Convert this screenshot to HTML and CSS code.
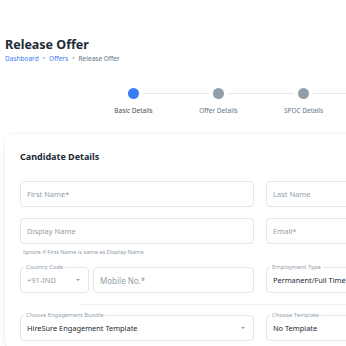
FILE: index.html
```html
<!DOCTYPE html>
<html lang="en">
<head>
  <meta charset="UTF-8">
  <title>Release Offer</title>
  <link rel="stylesheet" href="styles.css">
</head>
<body>
  <div class="page">
    <h1 class="title">Release Offer</h1>
    <div class="crumbs">
      <span class="crumb-link">Dashboard</span>
      <span class="dot">•</span>
      <span class="crumb-link">Offers</span>
      <span class="dot">•</span>
      <span class="crumb-current">Release Offer</span>
    </div>

    <div class="stepper">
      <div class="step first">
        <div class="step-top"><span class="bar"></span><span class="circle active"></span><span class="bar"></span></div>
        <div class="step-label active">Basic Details</div>
      </div>
      <div class="step">
        <div class="step-top"><span class="bar"></span><span class="circle"></span><span class="bar"></span></div>
        <div class="step-label">Offer Details</div>
      </div>
      <div class="step">
        <div class="step-top"><span class="bar"></span><span class="circle"></span><span class="bar"></span></div>
        <div class="step-label">SPOC Details</div>
      </div>
    </div>

    <div class="card">
      <h3 class="card-title">Candidate Details</h3>

      <div class="grid">
        <div class="input"><span class="ph">First Name*</span></div>
        <div class="input"><span class="ph">Last Name</span></div>

        <div class="cell">
          <div class="input"><span class="ph">Display Name</span></div>
          <div class="helper">Ignore if First Name is same as Display Name</div>
        </div>
        <div class="input"><span class="ph">Email*</span></div>

        <div class="phone">
          <fieldset class="field code">
            <legend>Country Code</legend>
            <span class="ph">+91-IND</span>
            <span class="caret"></span>
          </fieldset>
          <div class="input mobile"><span class="ph">Mobile No.*</span></div>
        </div>
        <fieldset class="field">
          <legend>Employment Type</legend>
          <span class="val">Permanent/Full Time</span>
        </fieldset>
      </div>

      <hr class="divider">

      <div class="grid">
        <fieldset class="field">
          <legend>Choose Engagement Bundle</legend>
          <span class="val">HireSure Engagement Template</span>
          <span class="caret"></span>
        </fieldset>
        <fieldset class="field">
          <legend>Choose Template</legend>
          <span class="val">No Template</span>
        </fieldset>
      </div>
    </div>
  </div>
</body>
</html>
```

FILE: styles.css
```css
html, body {
  margin: 0;
  padding: 0;
  background: #ffffff;
  overflow: hidden;
}

body {
  font-family: "Noto Sans", "Open Sans", sans-serif;
  color: #212b36;
}

.page {
  padding: 36px 0 0 5px;
  width: 700px;
}

.title {
  margin: 0;
  font-size: 12.5px;
  font-weight: 700;
  line-height: 18px;
  color: #212b36;
}

.crumbs {
  display: flex;
  gap: 4px;
  font-size: 6.5px;
  line-height: 10px;
  margin-top: 0;
}

.crumb-link {
  color: #3b7cf5;
}

.dot {
  color: #919eab;
}

.crumb-current {
  color: #637381;
}

.stepper {
  display: flex;
  margin-top: 23px;
  margin-left: 86px;
}

.step {
  width: 85px;
  display: flex;
  flex-direction: column;
  align-items: center;
}

.step-top {
  width: 100%;
  display: flex;
  align-items: center;
  gap: 4px;
  height: 12px;
}

.bar {
  flex: 1;
  height: 1px;
  background: #e4e7eb;
}

.first .bar:first-child {
  visibility: hidden;
}

.circle {
  width: 11px;
  height: 11px;
  border-radius: 50%;
  background: #919eab;
}

.circle.active {
  background: #3b7cf5;
}

.step-label {
  margin-top: 7px;
  font-size: 6.5px;
  line-height: 10px;
  color: #637381;
}

.step-label.active {
  color: #454f5b;
}

.card {
  margin-top: 18px;
  background: #fff;
  border-radius: 6px;
  box-shadow: 0 0 2px rgba(145, 158, 171, 0.25), 0 6px 12px -2px rgba(145, 158, 171, 0.14);
  padding: 16px 15px 6px;
}

.card-title {
  margin: 0 0 17px;
  font-size: 9px;
  font-weight: 700;
  line-height: 14px;
  color: #212b36;
}

.grid {
  display: grid;
  grid-template-columns: 234px 234px;
  column-gap: 12px;
  row-gap: 11px;
  align-items: start;
}

.input {
  height: 26px;
  box-sizing: border-box;
  border: 1px solid #e3e6ea;
  border-radius: 4px;
  display: flex;
  align-items: center;
  padding: 0 6px;
}

.ph {
  font-size: 7.5px;
  color: #919eab;
}

.val {
  font-size: 7.4px;
  color: #212b36;
  white-space: nowrap;
}

.helper {
  font-size: 5.7px;
  color: #919eab;
  margin: 4px 0 0 3px;
  line-height: 8px;
}

.phone {
  display: flex;
  gap: 4px;
}

.field {
  margin: -3px 0 0;
  height: 29px;
  box-sizing: border-box;
  border: 1px solid #e3e6ea;
  border-radius: 4px;
  padding: 0 6px 3px;
  display: flex;
  align-items: center;
  min-width: 0;
}

.field legend {
  font-size: 5.8px;
  color: #919eab;
  padding: 0 2px;
  margin-left: -3px;
  line-height: 6px;
  white-space: nowrap;
}

.code {
  width: 69px;
  flex: none;
}

.mobile {
  flex: 1;
}

.mobile .ph {
  font-size: 8px;
}

.caret {
  margin-left: auto;
  width: 0;
  height: 0;
  border-left: 2.5px solid transparent;
  border-right: 2.5px solid transparent;
  border-top: 2.5px solid #919eab;
  margin-right: 2px;
}

.divider {
  border: 0;
  border-top: 1px solid #eef0f2;
  margin: 11px 0 10px 60px;
}
```
